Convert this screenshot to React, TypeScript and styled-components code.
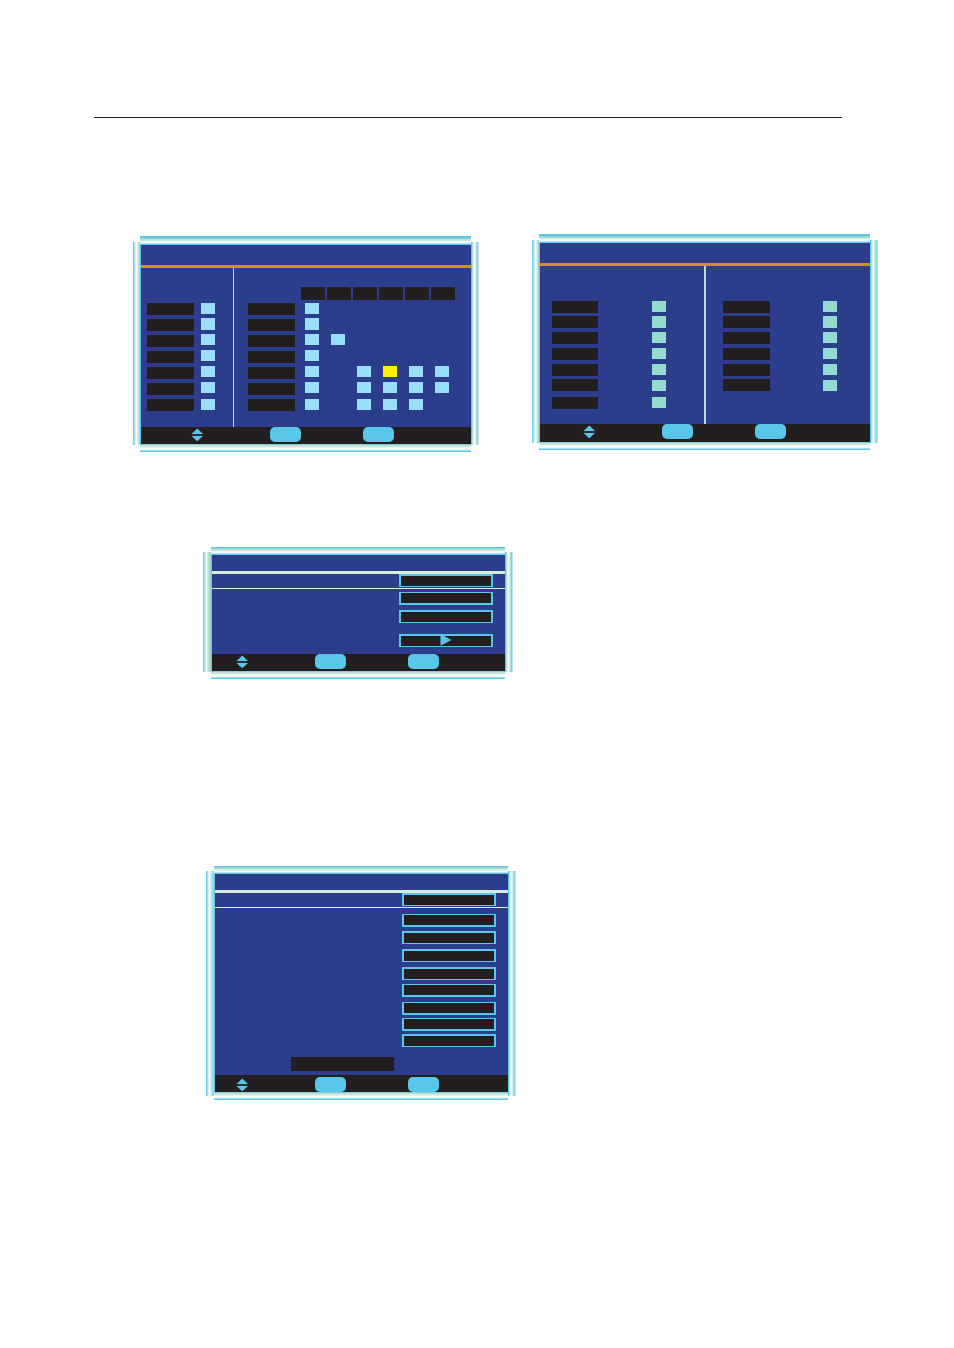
import React from 'react';
import styled, { createGlobalStyle } from 'styled-components';

const color = {
  blue: '#2c3e8b',
  cyan: '#58c7ea',
  black: '#231f20',
  orange: '#cf9224',
  mint: '#b5ddd3',
  pale: '#d9ecdc',
  light: '#99defa',
  teal: '#93dccf',
  yellow: '#fff200',
};

const GlobalStyle = createGlobalStyle`
  * { box-sizing: border-box; }
  body { margin: 0; background: #fff; font-family: "Liberation Sans", Arial, sans-serif; }
`;

const Page = styled.main`
  padding: 117px 0 248px;
`;

const Rule = styled.hr`
  margin: 0 112px 0 94px;
  border: 0;
  border-top: 1px solid ${color.black};
`;

const Pair = styled.section`
  display: grid;
  grid-template-columns: 1fr 1fr;
  column-gap: 53px;
  align-items: start;
  margin: 116px 76px 0 133px;
`;

const Single = styled.section<{ $top: number; $left: number }>`
  max-width: 310px;
  margin-top: ${(p) => p.$top}px;
  margin-left: ${(p) => p.$left}px;
`;

const Frame = styled.div<{ $side: number; $lip: number; $foot: number; $drop?: number }>`
  display: grid;
  grid-template-columns: ${(p) => p.$side}px 1fr 8px;
  grid-template-rows: ${(p) => p.$lip}px 3px auto ${(p) => p.$foot}px ${(p) => 8 - p.$foot}px;
  margin-top: ${(p) => p.$drop ?? 0}px;
`;

const TopBar = styled.div`
  grid-column: 2;
  grid-row: 1 / 3;
  background: linear-gradient(
    to top, #58c7ea 0 1px, #b5e6f7 1px 2px, #eef9fc 2px 3px, #eef6f0 3px 4px,
    #cfe6da 4px 5px, #b5ddd0 5px 6px, #8fd3da 6px 7px, #5bc6e6 7px
  );
`;

const BottomBar = styled.div`
  grid-column: 2;
  grid-row: 4 / 6;
  background: linear-gradient(
    to bottom, #7fd0dd 0 1px, #bfe0d1 1px 2px, #cfe6da 2px 3px, #e6f2ec 3px 4px,
    #fff 4px 5px, #e9f7fc 5px 6px, #a5e0f4 6px 7px, #5cc8ea 7px
  );
`;

const LeftBar = styled.div`
  grid-column: 1;
  grid-row: 2 / 5;
  background: linear-gradient(
    to right, #6fd0ec 0 1px, #a5e0f4 1px 2px, #d5f1fa 2px 3px, #fff 3px 4px,
    #e3f1ea 4px 5px, #c3e1d4 5px 6px, #a2d8d2 6px
  );
`;

const RightBar = styled.div`
  grid-column: 3;
  grid-row: 2 / 5;
  background: linear-gradient(
    to right, #58c7ea 0 1px, #a5e0f4 1px 2px, #d5f1fa 2px 3px, #fff 3px 4px,
    #d8ebe0 4px 5px, #b9dfd2 5px 6px, #84d2dc 6px 7px, #b9e8f4 7px
  );
`;

const Screen = styled.div`
  grid-column: 2;
  grid-row: 3;
  background: ${color.blue};
  border-left: 1px solid ${color.cyan};
`;

const TitleBar = styled.header<{ $height: number; $line: string }>`
  height: ${(p) => p.$height + 3}px;
  border-bottom: 3px solid ${(p) => p.$line};
`;

const Footer = styled.footer<{ $height: number; $start: number; $low?: boolean }>`
  display: flex;
  align-items: ${(p) => (p.$low ? 'flex-end' : 'flex-start')};
  height: ${(p) => p.$height}px;
  padding-left: ${(p) => p.$start}px;
  background: ${color.black};
`;

const Key = styled.button`
  width: 31px;
  height: 15px;
  padding: 0;
  border: 0;
  border-radius: 5px;
  background: ${color.cyan};
  & + & { margin-left: 62px; }
`;

const ArrowsIcon = styled.svg`
  flex: none;
  width: 12px;
  height: 15px;
  margin-right: 67px;
`;

const Panes = styled.div<{ $height: number; $columns: string }>`
  display: grid;
  grid-template-columns: ${(p) => p.$columns};
  height: ${(p) => p.$height}px;
`;

const Pane = styled.div<{ $pad: number; $gap: number; $divider?: number }>`
  display: flex;
  align-items: flex-start;
  gap: ${(p) => p.$gap}px;
  padding-left: ${(p) => p.$pad}px;
  border-right: ${(p) => p.$divider ?? 0}px solid ${color.mint};
`;

const Stack = styled.div<{ $rows: string }>`
  display: grid;
  grid-template-rows: ${(p) => p.$rows};
  padding-top: 35px;
`;

const Tag = styled.div<{ $width: number }>`
  width: ${(p) => p.$width}px;
  height: 12px;
  background: ${color.black};
`;

const Light = styled.input<{ $color?: string; $tall?: boolean }>`
  appearance: none;
  display: block;
  width: 14px;
  height: ${(p) => (p.$tall ? 12 : 11)}px;
  margin: 0;
  background: ${(p) => p.$color ?? color.light};
`;

const Matrix = styled.div`
  display: grid;
  grid-template-columns: repeat(6, 24px);
  grid-template-rows: 16px 15px 16px 16px 16px 16px 17px 11px;
  column-gap: 2px;
  padding-top: 19px;
`;

const Heading = styled.div`
  height: 13px;
  background: ${color.black};
`;

const Cell = styled.div`
  padding-left: 4px;
`;

const SelectedRow = styled.div`
  display: flex;
  justify-content: flex-end;
  height: 15px;
  padding-right: 12px;
  border-bottom: 1px solid ${color.pale};
`;

const Fields = styled.div<{ $pad: number; $rows: string }>`
  display: grid;
  justify-content: end;
  grid-template-rows: ${(p) => p.$rows};
  padding: ${(p) => p.$pad}px 12px 0 0;
`;

const Field = styled.input<{ $heavy?: 'top' | 'bottom' }>`
  display: block;
  width: 94px;
  height: 13px;
  padding: 0;
  border: solid ${color.cyan};
  border-width: ${(p) => (p.$heavy === 'bottom' ? '1px 2px 2px' : '2px 2px 1px')};
  border-radius: 0;
  background: ${color.black};
  color: ${color.cyan};
  font: 9px "Liberation Sans", sans-serif;
`;

const EnterField = styled.button`
  display: flex;
  justify-content: center;
  width: 94px;
  height: 13px;
  padding: 0;
  border: solid ${color.cyan};
  border-width: 2px 2px 1px;
  background: ${color.black};
`;

const Notice = styled.div`
  width: 103px;
  height: 14px;
  margin: 10px 0 4px 76px;
  background: ${color.black};
`;

function Arrows() {
  return (
    <ArrowsIcon viewBox="0 0 12 15" aria-hidden="true">
      <path d="M6.3 1.6 12 7H.5Z" fill={color.cyan} />
      <path d="M.5 9H12L6.3 14.2Z" fill={color.cyan} />
      <path d="M1 8H11.5" stroke="#4b6068" strokeWidth="1" opacity=".5" />
    </ArrowsIcon>
  );
}

function Keys(props: { height: number; start: number; low?: boolean }) {
  return (
    <Footer $height={props.height} $start={props.start} $low={props.low}>
      <Arrows />
      <Key type="button" aria-label="Enter" />
      <Key type="button" aria-label="Menu" />
    </Footer>
  );
}

function Bezel(props: {
  side: number;
  lip: number;
  foot?: number;
  drop?: number;
  children: React.ReactNode;
}) {
  return (
    <Frame $side={props.side} $lip={props.lip} $foot={props.foot ?? 1} $drop={props.drop}>
      <TopBar />
      <LeftBar />
      <Screen>{props.children}</Screen>
      <RightBar />
      <BottomBar />
    </Frame>
  );
}

const range = (n: number) => Array.from({ length: n }, (_, i) => i);

function Tags({ count, rows, width = 47 }: { count: number; rows: string; width?: number }) {
  return (
    <Stack $rows={rows}>
      {range(count).map((i) => <Tag key={i} $width={width} />)}
    </Stack>
  );
}

function Lights({ count, tone, name }: { count: number; tone?: string; name: string }) {
  return (
    <Stack $rows="15px 16px 16px 16px 16px 17px 11px">
      {range(count).map((i) => (
        <Light
          key={i}
          type="checkbox"
          $color={tone}
          $tall={i === 1}
          aria-label={`${name} ${i + 1}`}
        />
      ))}
    </Stack>
  );
}

const evenRows = 'repeat(7, 16px)';
const channelRows = '15px 16px 16px 16px 15px 18px 12px';

const matrix = ['x.....', 'x.....', 'xx....', 'x.....', 'x.xyxx', 'x.xxxx', 'x.xxx.'];

export default function App() {
  return (
    <>
      <GlobalStyle />
      <Page>
        <Rule />
        <Pair>
          <Bezel side={7} lip={6} drop={2}>
            <TitleBar $height={20} $line={color.orange} />
            <Panes $height={159} $columns="93px 1fr">
              <Pane $pad={6} $gap={7} $divider={1}>
                <Tags count={7} rows={evenRows} />
                <Lights count={7} name="Source" />
              </Pane>
              <Pane $pad={14} $gap={6}>
                <Tags count={7} rows={evenRows} />
                <Matrix>
                  {range(6).map((i) => <Heading key={i} />)}
                  {matrix.flatMap((line, r) =>
                    line.split('').map((c, k) => (
                      <Cell key={`${r}-${k}`}>
                        {c !== '.' && (
                          <Light
                            type="checkbox"
                            aria-label={`Row ${r + 1} column ${k + 1}`}
                            $tall={r === 1}
                            $color={c === 'y' ? color.yellow : undefined}
                          />
                        )}
                      </Cell>
                    )),
                  )}
                </Matrix>
              </Pane>
            </Panes>
            <Keys height={17} start={50} />
          </Bezel>
          <Bezel side={7} lip={6}>
            <TitleBar $height={20} $line={color.orange} />
            <Panes $height={158} $columns="166px 1fr">
              <Pane $pad={12} $gap={54} $divider={2}>
                <Tags count={7} rows={channelRows} width={46} />
                <Lights count={7} tone={color.teal} name="Left" />
              </Pane>
              <Pane $pad={17} $gap={53}>
                <Tags count={6} rows={channelRows} />
                <Lights count={6} tone={color.teal} name="Right" />
              </Pane>
            </Panes>
            <Keys height={18} start={43} />
          </Bezel>
        </Pair>

        <Single $top={95} $left={203}>
          <Bezel side={8} lip={5}>
            <TitleBar $height={16} $line={color.pale} />
            <SelectedRow>
              <Field readOnly aria-label="Selected value" />
            </SelectedRow>
            <Fields $pad={3} $rows="18px 24px 20px">
              <Field readOnly aria-label="Value 2" $heavy="bottom" />
              <Field readOnly aria-label="Value 3" />
              <EnterField type="button" aria-label="Open">
                <svg width="12" height="10" viewBox="0 0 12 10" aria-hidden="true">
                  <path d="M.5 0H4L11.5 4 1.5 9.3H.5Z" fill={color.cyan} />
                </svg>
              </EnterField>
            </Fields>
            <Keys height={17} start={24} />
          </Bezel>
        </Single>

        <Single $top={187} $left={206}>
          <Bezel side={8} lip={5} foot={4}>
            <TitleBar $height={16} $line={color.pale} />
            <SelectedRow>
              <Field readOnly aria-label="Selected value" />
            </SelectedRow>
            <Fields $pad={6} $rows="17px 18px 18px 17px 18px 16px 16px 13px">
              {range(8).map((i) => (
                <Field
                  key={i}
                  readOnly
                  aria-label={`Value ${i + 2}`}
                  $heavy={[0, 4, 5, 6].includes(i) ? 'bottom' : 'top'}
                />
              ))}
            </Fields>
            <Notice />
            <Keys height={17} start={21} low />
          </Bezel>
        </Single>
      </Page>
    </>
  );
}
